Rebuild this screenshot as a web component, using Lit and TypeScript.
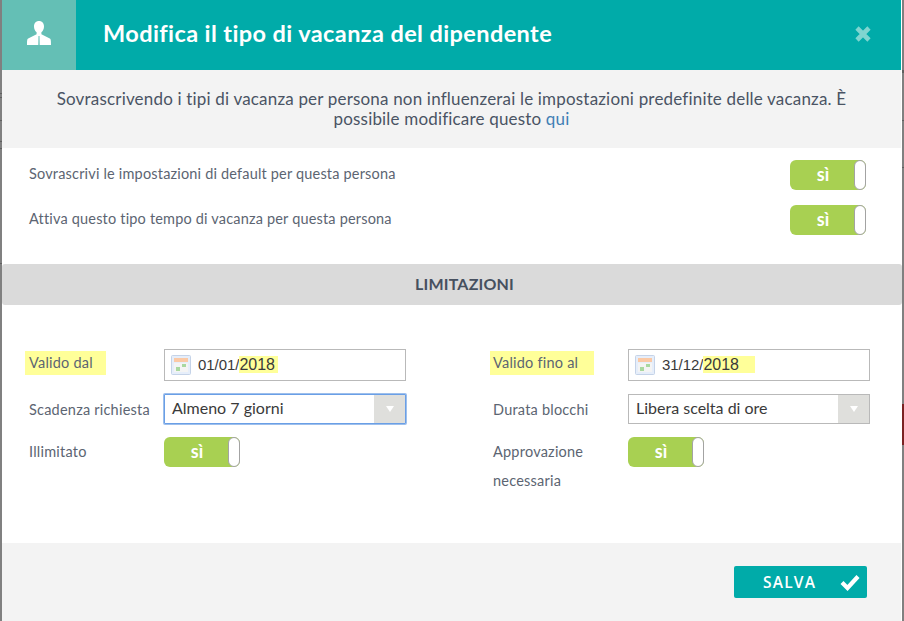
import { LitElement, html, css } from "lit";
import { customElement } from "lit/decorators.js";

const LEFT_TICKS = [93, 97, 120, 141, 148, 263];
const RIGHT_TICKS = [70, 71, 72, 120, 167];

@customElement("app-root")
export class AppRoot extends LitElement {
  static styles = css`
    :host { display: block; width: 904px; height: 621px; background: #808080; position: relative; overflow: hidden; font-family: "Lato", "Open Sans", sans-serif; color: #3f4a5a; }
    .edge { position: absolute; right: 0; top: 404px; width: 2px; height: 41px; background: #7a2222; }
    .tick { position: absolute; width: 2px; height: 1px; background: #5f5f5f; }
    .tick.l { left: 0; }
    .tick.r { right: 0; }
    .modal { margin: 0 2px; height: 621px; background: #fff; display: flex; flex-direction: column; }
    .head { height: 70px; display: flex; align-items: center; background: #00aba9; margin-right: 1px; }
    .head-icon { width: 74px; height: 70px; background: #64bfb5; display: flex; align-items: center; justify-content: center; }
    .head-icon svg { width: 26px; height: 26px; margin-bottom: 4px; }
    .head h1 { flex: 1; margin: 0 0 5px 27px; font-size: 23.5px; font-weight: 700; color: #fff; letter-spacing: 0.4px; line-height: 28px; }
    .close { width: 18px; height: 18px; margin: 0 29px 3px 0; }
    .notice { height: 78px; box-sizing: border-box; background: #f3f3f3; padding: 19px 45px 0; text-align: center; font-size: 17px; line-height: 20px; letter-spacing: 0.18px; color: #4a5464; margin-right: 1px; }
    .notice a { color: #3f7fb5; text-decoration: none; }
    .opts { height: 116px; box-sizing: border-box; padding: 12px 36px 0 27px; display: flex; flex-direction: column; gap: 15px; }
    .opt { display: flex; justify-content: space-between; align-items: center; font-size: 14.5px; letter-spacing: 0.18px; color: #5c6572; }
    .opt > span { margin-bottom: 3px; }
    .toggle { width: 76px; height: 30px; box-sizing: border-box; background: #a8d052; border-radius: 6px; display: flex; align-items: center; color: #fff; font-weight: 700; font-size: 18px; letter-spacing: 0; flex: none; }
    .toggle span { flex: 1; text-align: center; padding: 0 0 2px 2px; }
    .toggle i { width: 12px; height: 30px; box-sizing: border-box; background: #fff; border: 1px solid #a3a3a3; border-radius: 6px; }
    .bar { height: 41px; background: #dadada; border-radius: 3px; display: flex; align-items: center; justify-content: center; padding-left: 25px; font-size: 16px; font-weight: 700; color: #46505f; letter-spacing: 0.2px; }
    .bar span { margin-bottom: 2px; }
    .form { flex: 1; box-sizing: border-box; padding: 44px 0 0 27px; display: grid; grid-template-columns: 135px 242px 87px 135px 242px; grid-template-rows: 32px 30px auto; row-gap: 13px; align-content: start; }
    .c2 { grid-column: 4; }
    .lbl { font-size: 14.5px; letter-spacing: 0.22px; color: #5c6572; display: flex; align-items: center; }
    .lbl.top { align-items: flex-start; line-height: 29px; }
    .mark { background: #ffff99; padding: 3px 13px 4px 4px; margin: -4px 0 0 -4px; }
    .mark.r { padding: 3px 16px 4px 3px; margin-left: -3px; }
    .input { box-sizing: border-box; border: 1px solid #b9b9b9; display: flex; align-items: center; padding-left: 6px; font-family: "Liberation Sans", sans-serif; font-size: 15px; color: #3a3a3a; background: #fff; }
    .input svg { width: 20px; height: 20px; margin-right: 7px; }
    .input > span { margin-bottom: 2px; letter-spacing: -0.05px; }
    .input em { font-style: normal; font-size: 16px; letter-spacing: 0; background: #ffff99; line-height: 23px; padding-right: 3px; }
    .input em.w { padding-right: 16px; }
    .select { box-sizing: border-box; border: 1px solid #b9b9b9; display: flex; align-items: center; padding-left: 7px; font-size: 16px; color: #3a3a3a; background: #fff; }
    .select.focus { border: 1px solid #6a9fe6; box-shadow: 0 0 0 1px #9dbfec; border-radius: 1px; }
    .select span { flex: 1; margin-bottom: 3px; }
    .arrow { width: 31px; align-self: stretch; background: #dfdfdc; display: flex; align-items: center; justify-content: center; }
    .arrow b { width: 0; height: 0; border-left: 4px solid transparent; border-right: 4px solid transparent; border-top: 6px solid #fff; }
    .foot { height: 78px; background: #f3f3f3; display: flex; justify-content: flex-end; align-items: flex-start; padding: 23px 34px 0 0; margin-right: 1px; box-sizing: border-box; }
    .save { width: 133px; height: 32px; border-radius: 2px; background: #00aba9; color: #fff; font-size: 15.5px; font-weight: 600; letter-spacing: 1.2px; display: flex; align-items: center; padding: 0 7px 0 29px; box-sizing: border-box; justify-content: space-between; font-family: "Open Sans", sans-serif; }
    .save svg { width: 20px; height: 18px; margin-bottom: 1px; }
  `;

  private cal() {
    return html`<svg viewBox="0 0 20 20"><rect x="0.5" y="0.5" width="19" height="19" rx="1" fill="#e6eefa" stroke="#c5d3e8"/><rect x="3" y="3" width="14" height="4" fill="#fbc9a5"/><rect x="3" y="8" width="14" height="9" fill="#f4f4f4"/><rect x="5" y="12" width="4" height="4" fill="#a9d8a0"/><rect x="11" y="9" width="4" height="3" fill="#a9d8a0"/></svg>`;
  }
  private toggle() {
    return html`<div class="toggle"><span>sì</span><i></i></div>`;
  }

  render() {
    return html`
      <div class="modal">
        <div class="head">
          <div class="head-icon">
            <svg viewBox="0 0 26 26"><path fill="#fff" d="M13 1c3 0 5 2.200 5 5.400 0 2.400-1 4.600-2.600 5.800v2l8.400 4.400c1 .5 1.200 2 1.200 6.400H13.700l-.2-9h-1l-.2 9H1c0-4.400.2-5.900 1.200-6.400l8.400-4.400v-2C9 11 8 8.800 8 6.400 8 3.200 10 1 13 1z"/></svg>
          </div>
          <h1>Modifica il tipo di vacanza del dipendente</h1>
          <svg class="close" viewBox="0 0 18 18"><path d="M3 3l12 12M15 3L3 15" stroke="#7fd5d0" stroke-width="4.600" fill="none"/></svg>
        </div>
        <div class="notice">Sovrascrivendo i tipi di vacanza per persona non influenzerai le impostazioni predefinite delle vacanza. È possibile modificare questo <a>qui</a></div>
        <div class="opts">
          <div class="opt"><span>Sovrascrivi le impostazioni di default per questa persona</span>${this.toggle()}</div>
          <div class="opt"><span>Attiva questo tipo tempo di vacanza per questa persona</span>${this.toggle()}</div>
        </div>
        <div class="bar"><span>LIMITAZIONI</span></div>
        <div class="form">
          <div class="lbl"><span class="mark">Valido dal</span></div>
          <div class="input">${this.cal()}<span>01/01/<em>2018</em></span></div>
          <div class="lbl c2"><span class="mark r">Valido fino al</span></div>
          <div class="input">${this.cal()}<span>31/12/<em class="w">2018</em></span></div>

          <div class="lbl">Scadenza richiesta</div>
          <div class="select focus"><span>Almeno 7 giorni</span><div class="arrow"><b></b></div></div>
          <div class="lbl c2">Durata blocchi</div>
          <div class="select"><span>Libera scelta di ore</span><div class="arrow"><b></b></div></div>

          <div class="lbl top">Illimitato</div>
          <div>${this.toggle()}</div>
          <div class="lbl top c2">Approvazione<br />necessaria</div>
          <div>${this.toggle()}</div>
        </div>
        <div class="foot">
          <div class="save">SALVA<svg viewBox="0 0 20 18"><path d="M2 9.500l5.500 5.500L18 3.500" stroke="#fff" stroke-width="4.200" fill="none"/></svg></div>
        </div>
      </div>
      <div class="edge"></div>
      ${LEFT_TICKS.map((y) => html`<div class="tick l" style="top:${y}px"></div>`)}
      ${RIGHT_TICKS.map((y) => html`<div class="tick r" style="top:${y}px"></div>`)}
    `;
  }
}
